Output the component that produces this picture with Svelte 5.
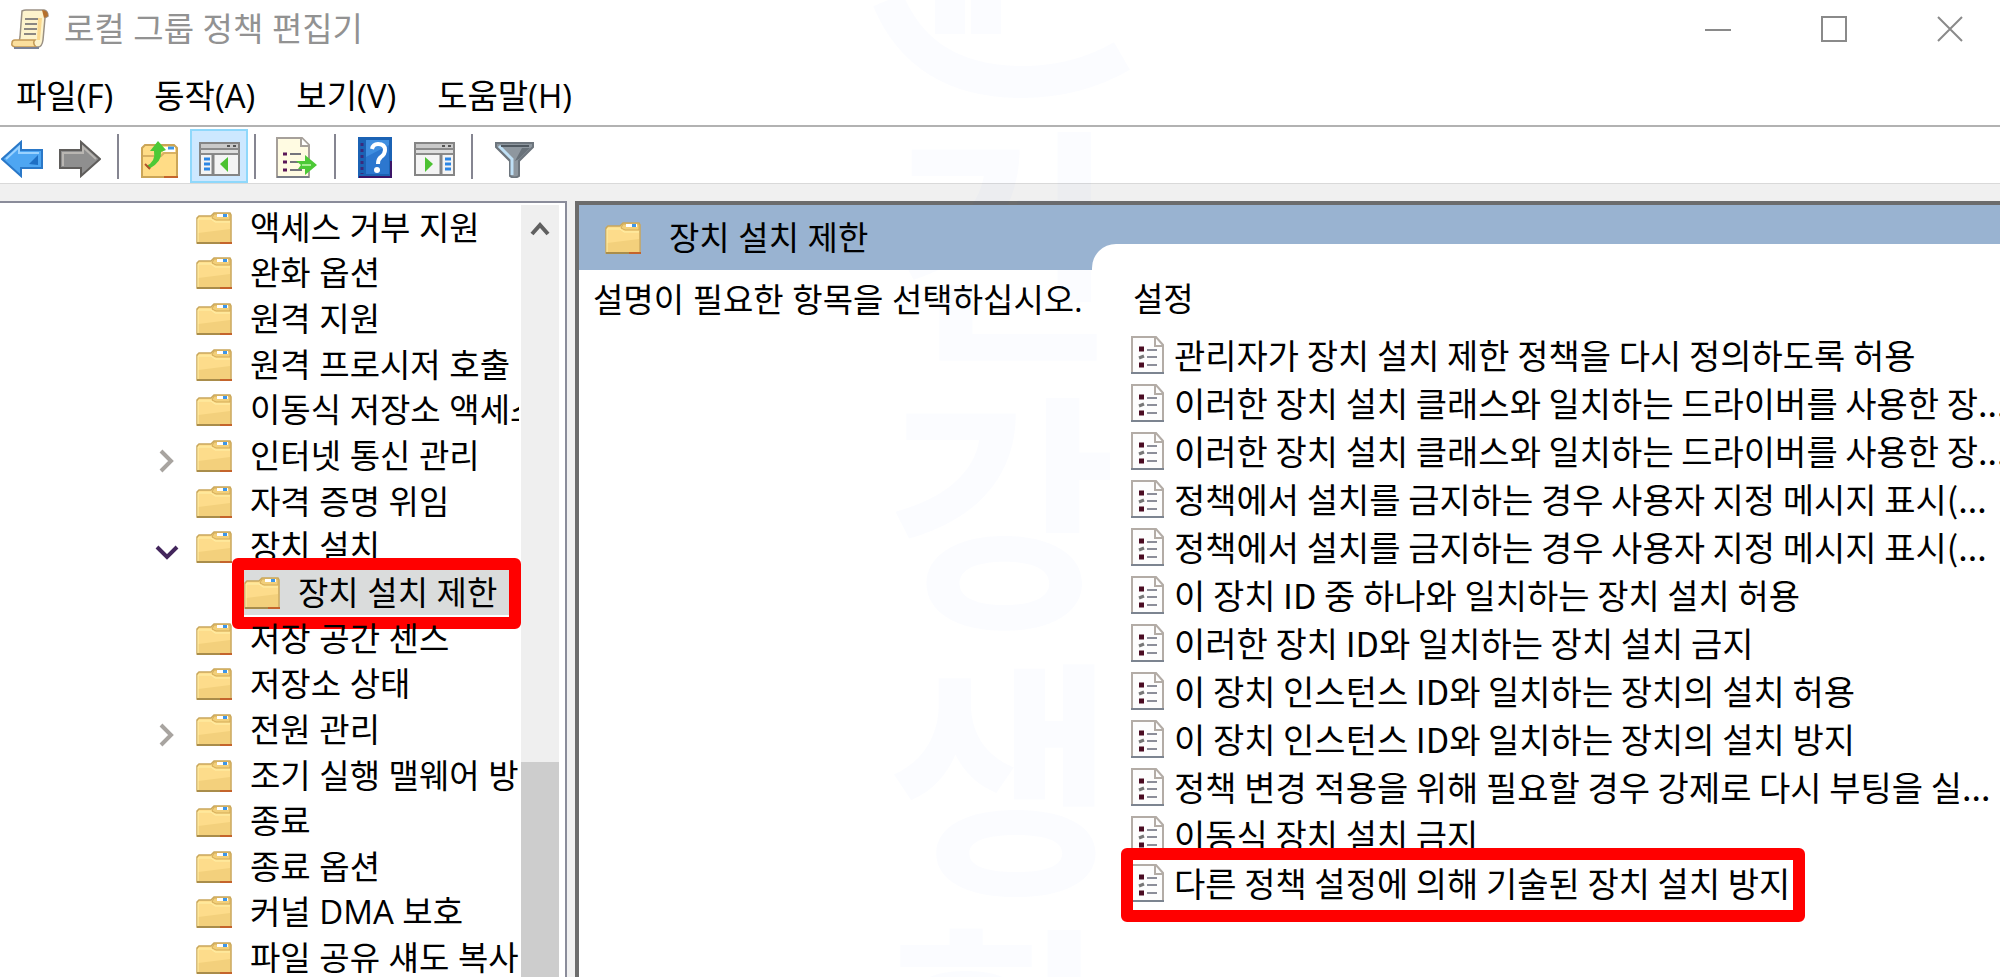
<script>
  const menus = ['파일(F)', '동작(A)', '보기(V)', '도움말(H)'];

  const tree = [
    { name: '액세스 거부 지원' },
    { name: '완화 옵션' },
    { name: '원격 지원' },
    { name: '원격 프로시저 호출' },
    { name: '이동식 저장소 액세스' },
    { name: '인터넷 통신 관리', state: 'closed' },
    { name: '자격 증명 위임' },
    { name: '장치 설치', state: 'open' },
    { name: '장치 설치 제한', child: true, marked: true },
    { name: '저장 공간 센스' },
    { name: '저장소 상태' },
    { name: '전원 관리', state: 'closed' },
    { name: '조기 실행 맬웨어 방지' },
    { name: '종료' },
    { name: '종료 옵션' },
    { name: '커널 DMA 보호' },
    { name: '파일 공유 섀도 복사본' }
  ];

  const settings = [
    { name: '관리자가 장치 설치 제한 정책을 다시 정의하도록 허용' },
    { name: '이러한 장치 설치 클래스와 일치하는 드라이버를 사용한 장...' },
    { name: '이러한 장치 설치 클래스와 일치하는 드라이버를 사용한 장...' },
    { name: '정책에서 설치를 금지하는 경우 사용자 지정 메시지 표시(...' },
    { name: '정책에서 설치를 금지하는 경우 사용자 지정 메시지 표시(...' },
    { name: '이 장치 ID 중 하나와 일치하는 장치 설치 허용' },
    { name: '이러한 장치 ID와 일치하는 장치 설치 금지' },
    { name: '이 장치 인스턴스 ID와 일치하는 장치의 설치 허용' },
    { name: '이 장치 인스턴스 ID와 일치하는 장치의 설치 방지' },
    { name: '정책 변경 적용을 위해 필요할 경우 강제로 다시 부팅을 실...' },
    { name: '이동식 장치 설치 금지' },
    { name: '다른 정책 설정에 의해 기술된 장치 설치 방지', marked: true }
  ];

  let selected = $state('장치 설치 제한');
</script>

{#snippet folder()}
  <svg class="folder" viewBox="0 0 36 32" aria-hidden="true">
    <path d="M1 6 L3 4 H15 L18 1 H34 L35 3 V31 H1 Z" fill="#ffdf8e" stroke="#c9a75c" stroke-width="1.5" />
    <path d="M18 2 H34 V8 H20 L16 6 Z" fill="#f2cf7a" stroke="#d3ac58" />
    <rect x="21" y="2" width="11" height="3" fill="#fff" />
    <rect x="27" y="2" width="4" height="3" fill="#3d96e8" />
    <path d="M2 7 H15 L19 10 H34 V30 H2 Z" fill="#fddc8b" />
    <path d="M2 21 L34 17 V30 H2 Z" fill="#f3d07c" />
    <path d="M2 30 V7 H15 L19 10 H34" fill="none" stroke="#fff0a8" />
    <path d="M1 31 H24" stroke="#a98d4b" stroke-width="2" />
    <path d="M24 31 H36" stroke="#c4642c" stroke-width="2" />
  </svg>
{/snippet}

{#snippet pane(flip)}
  <svg width="41" height="34" viewBox="0 0 41 34" aria-hidden="true">
    <rect x="1" y="1" width="39" height="32" fill="#f4f4f4" stroke="#858585" stroke-width="2" />
    <rect x="2" y="2" width="37" height="4" fill="#c9c9c9" />
    <path d="M28 4 H31 M34 4 H37" stroke="#555" stroke-width="2" />
    <path d="M1 7 H40 M1 12 H40" stroke="#8a8a8a" stroke-width="2" />
    <path d="M2 9.500 H39" stroke="#dedede" stroke-width="3" />
    {#if flip}
      <path d="M27 12 V33" stroke="#858585" stroke-width="3" />
      <path d="M31 17 H37 M31 22 H37 M31 27 H37" stroke="#2c86e4" stroke-width="3" />
      <path d="M11 15 L19 22 L11 30 Z" fill="#4cc232" />
    {:else}
      <path d="M14 12 V33" stroke="#858585" stroke-width="3" />
      <path d="M5 17 H11 M5 22 H11 M5 27 H11" stroke="#2c86e4" stroke-width="3" />
      <path d="M29 15 L21 22 L29 30 Z" fill="#4cc232" />
    {/if}
  </svg>
{/snippet}

<div class="window">
  <header class="titlebar">
    <svg width="38" height="40" viewBox="0 0 38 40" aria-hidden="true">
      <path d="M11 2 Q13 1 15 1 H33 Q37 2 37 7 L34 9 L32 31 Q31 38 27 38 H7 L9 28 Z" fill="#fdf3cc" stroke="#9a9084" stroke-width="1.5" />
      <path d="M31 1 Q37 1 37 7 L33 9 Z" fill="#b5702c" />
      <path d="M27 9 L31 9 L29 31 L26 31 Z" fill="#fbd98e" />
      <path d="M14 10 H27 M14 15 H26 M13 20 H26 M13 25 H25" stroke="#8b8782" stroke-width="2" />
      <path d="M4 31 H24 Q21 34 25 38 H4 Q0 37 1 34 Q1 31 4 31 Z" fill="#fbdf9d" stroke="#c39a58" stroke-width="1.500" />
      <path d="M3 39 H28" stroke="#7b8296" stroke-width="2" />
    </svg>
    <h1>로컬 그룹 정책 편집기</h1>
    <div class="caption">
      <button aria-label="최소화"><svg width="26" height="26" viewBox="0 0 26 26"><path d="M0 14 H26" /></svg></button>
      <button aria-label="최대화"><svg width="26" height="26" viewBox="0 0 26 26"><rect x="1" y="1" width="24" height="24" /></svg></button>
      <button aria-label="닫기"><svg width="26" height="26" viewBox="0 0 26 26"><path d="M1 1 L25 25 M25 1 L1 25" /></svg></button>
    </div>
  </header>

  <nav class="menubar">
    {#each menus as menu}<button>{menu}</button>{/each}
  </nav>

  <div class="toolbar">
    <button aria-label="뒤로">
      <svg width="42" height="38" viewBox="0 0 42 38">
        <path d="M1 19 L20 2 V10 H41 V28 H20 V36 Z" fill="#4ea6f2" stroke="#2a78c8" stroke-width="2" />
        <path d="M5 19 L18 7 V13 H38" fill="none" stroke="#9ad2ff" stroke-width="2" />
        <path d="M28 24 L37 15 V25 Z" fill="#1e6fc4" />
      </svg>
    </button>
    <button aria-label="앞으로">
      <svg width="42" height="38" viewBox="0 0 42 38">
        <path d="M41 19 L22 2 V10 H1 V28 H22 V36 Z" fill="#8f8f8f" stroke="#5f5d5b" stroke-width="2" />
        <path d="M4 26 V13 H24 V7 L37 19" fill="none" stroke="#b9b6b2" stroke-width="2" />
      </svg>
    </button>
    <span class="sep"></span>
    <button class="up" aria-label="위로">
      <svg width="37" height="38" viewBox="0 0 37 38">
        <path d="M1 8 L4 5 H33 L36 8 V37 H1 Z" fill="#ffdc86" stroke="#cba557" stroke-width="2" />
        <path d="M22 7 H34 V12 H22 Z" fill="#fff" />
        <path d="M27 8 H33" stroke="#3d96e8" stroke-width="3" />
        <path d="M2 16 H20 L23 13 H35" fill="none" stroke="#d8b163" stroke-width="2" />
        <path d="M5 26 Q15 22 13 11 H9 L17 1 L25 10 L20 12 Q21 22 8 29 Z" fill="#4cc936" />
        <path d="M4 24 L9 29" stroke="#b1542d" stroke-width="2" />
        <path d="M23 37 H37" stroke="#c4642c" stroke-width="2" />
      </svg>
    </button>
    <button class="active" aria-label="콘솔 트리 표시/숨기기" aria-pressed="true">{@render pane(false)}</button>
    <span class="sep near"></span>
    <button class="export" aria-label="목록 내보내기">
      <svg width="42" height="41" viewBox="0 0 42 41">
        <path d="M1 1 H26 L33 8 V40 H1 Z" fill="#fffbe2" stroke="#a6a09a" stroke-width="2" />
        <path d="M25 1 V9 H33" fill="#fff" stroke="#a6a09a" stroke-width="2" />
        <path d="M1 40 H33" stroke="#777b85" stroke-width="2" />
        <path d="M7 17 H11 M7 25 H11 M7 33 H11" stroke="#5b1758" stroke-width="3" />
        <path d="M14 17 H25 M14 25 H22 M14 33 H26" stroke="#74747c" stroke-width="2" />
        <path d="M20 24 H29 V18 L41 28 L29 38 V32 H22 L25 28 Z" fill="#4cc936" />
        <path d="M26 28 H35" stroke="#a8ee92" stroke-width="2" />
      </svg>
    </button>
    <span class="sep"></span>
    <button class="help" aria-label="도움말">
      <svg width="34" height="41" viewBox="0 0 34 41">
        <rect width="34" height="41" fill="#1b62b4" />
        <rect x="8" y="3" width="23" height="34" fill="#3f8ee0" />
        <path d="M8 20 L31 8 V37 H8 Z" fill="#2c77cf" />
        <path d="M4 6 V37" stroke="#3b2a7c" stroke-width="3" stroke-dasharray="3 3" />
        <path d="M1 40 H34 M33 24 V41" stroke="#3c1568" stroke-width="2" />
        <path d="M14 12 Q15 7 20 7 Q27 7 27 13 Q27 17 23 20 Q20 22 20 27" fill="none" stroke="#fff" stroke-width="4" />
        <circle cx="19" cy="33" r="3" fill="#fff" />
      </svg>
    </button>
    <button aria-label="작업 창 표시/숨기기">{@render pane(true)}</button>
    <span class="sep"></span>
    <button class="filter" aria-label="필터">
      <svg width="39" height="37" viewBox="0 0 39 37">
        <path d="M1 2 H38 V6 L24 20 V35 Q19 38 15 35 V20 L1 6 Z" fill="#8e979f" stroke="#6d757d" stroke-width="2" />
        <path d="M4 5 L17 18 V34" fill="none" stroke="#bfe0f6" stroke-width="3" />
        <path d="M6 5 H34" stroke="#4f5860" stroke-width="2" />
        <path d="M24 18 L35 7 H27 L20 20 Z" fill="#69727a" />
      </svg>
    </button>
  </div>

  <main class="panes">
    <aside class="tree">
      <ul>
        {#each tree as node}
          <li class:child={node.child}>
            <span class="twisty">
              {#if node.state === 'closed'}
                <button aria-label="확장"><svg width="16" height="24" viewBox="0 0 16 24"><path d="M2 2 L12 12 L2 22" stroke="#a8a4a0" /></svg></button>
              {:else if node.state === 'open'}
                <button aria-label="축소"><svg width="24" height="16" viewBox="0 0 24 16"><path d="M2 3 L12 13 L22 3" stroke="#43265c" /></svg></button>
              {/if}
            </span>
            <button class="node" class:selected={selected === node.name} onclick={() => (selected = node.name)}>
              {@render folder()}{node.name}
            </button>
            {#if node.marked}<span class="mark"></span>{/if}
          </li>
        {/each}
      </ul>
      <div class="scroll">
        <button aria-label="위로 스크롤"><svg width="20" height="18" viewBox="0 0 20 18"><path d="M2 15 L10 6 L18 15" stroke="#606060" /></svg></button>
        <div class="thumb"></div>
      </div>
    </aside>

    <section class="details">
      <div class="band">{@render folder()}<h2>장치 설치 제한</h2></div>
      <div class="columns">
        <p>설명이 필요한 항목을 선택하십시오.</p>
        <div class="list">
          <h3>설정</h3>
          <ul>
            {#each settings as item}
              <li>
                <button>
                  <svg width="33" height="38" viewBox="0 0 33 38" aria-hidden="true">
                    <path d="M1 1 H25 L32 9 V37 H1 Z" fill="#fdfdfd" stroke="#b3aca6" stroke-width="2" />
                    <path d="M24 1 V10 H32" fill="none" stroke="#b3aca6" stroke-width="2" />
                    <path d="M0 37 H33" stroke="#7c8490" stroke-width="2" />
                    <path d="M8 13 H13 M8 29 H13" stroke="#4a0c22" stroke-width="5" />
                    <path d="M8 22 L13 20" stroke="#777" stroke-width="3" />
                    <path d="M16 14 H26 M16 21 H26 M16 29 H26" stroke="#8c8e99" stroke-width="2" />
                  </svg>
                  {item.name}
                </button>
                {#if item.marked}<span class="mark"></span>{/if}
              </li>
            {/each}
          </ul>
        </div>
      </div>
    </section>
  </main>

  <!-- faint stamp printed over the whole window -->
  <div class="stamp" aria-hidden="true">
    <svg width="260" height="100" viewBox="0 0 260 100">
      <path d="M16 0 Q50 82 150 82 Q205 82 250 56" fill="none" stroke-width="32" />
      <path d="M78 0 V34 M114 0 V34" stroke-width="30" />
    </svg>
    <span>건</span><span>강</span><span>생</span><span>활</span>
  </div>
</div>

<style>
  :global(body) { background: #fff; overflow: hidden; }

  .window {
    position: relative;
    display: flex;
    flex-direction: column;
    height: 100vh;
    overflow: hidden;
    color: #000;
    background: #fff;
    font: 33px/40px "Open Sans", "Noto Sans CJK KR", sans-serif;
  }

  button { display: flex; align-items: center; flex: none; margin: 0; padding: 0; border: 0; background: none; color: inherit; font: inherit; white-space: nowrap; }
  ul { list-style: none; margin: 0; padding: 0; }
  h1, h2, h3, p { margin: 0; font: inherit; white-space: nowrap; }
  svg { display: block; flex: none; }

  .titlebar { display: flex; align-items: center; flex: none; height: 58px; padding-left: 11px; gap: 15px; color: #929292; }
  .caption { display: flex; gap: 16px; margin-left: auto; }
  .caption button { justify-content: center; width: 100px; height: 58px; }
  .caption svg { fill: none; stroke: #8a8a8a; stroke-width: 2; }

  .menubar { display: flex; align-items: center; flex: none; gap: 41px; height: 59px; padding: 8px 16px 0; border-bottom: 2px solid #b2b2b2; }

  .toolbar { display: flex; align-items: center; flex: none; box-sizing: border-box; height: 57px; padding: 2px 0 0 1px; gap: 16px; border-bottom: 1px solid #d9d9d9; }
  .toolbar button { height: 54px; padding-top: 6px; box-sizing: border-box; }
  .sep { width: 2px; height: 45px; background: #858591; }
  .toolbar .up { padding-left: 6px; }
  .toolbar .active { justify-content: center; width: 58px; margin-left: -4px; border: 2px solid #8fd8fb; background: #cde8ff; }
  .sep.near { margin-left: -10px; }
  .toolbar .export { padding: 2px 0 0 4px; }
  .toolbar .help { padding: 2px 6px 0 6px; }
  .toolbar .filter { padding-left: 6px; }

  .panes { display: grid; grid-template-columns: 567px minmax(0, 1fr); gap: 8px; flex: 1; min-height: 0; padding-top: 17px; background: #f0f0f0; }

  .tree { display: flex; min-height: 0; border: solid #8a8c9a; border-width: 2px 2px 0 0; background: #fff; }
  .tree ul { display: flex; flex-direction: column; flex: 1; min-width: 0; padding-top: 2px; margin: 0 2px -4px 0; }
  .tree li { position: relative; display: flex; align-items: center; flex: 1; min-height: 0; padding-left: 148px; }
  .tree li.child { padding-left: 196px; }
  .tree li:not(.child) { overflow: hidden; }
  .twisty { display: flex; flex: none; justify-content: center; width: 38px; padding: 10px 10px 0 0; }
  .child .twisty { display: none; }
  .twisty path, .scroll path { fill: none; stroke-width: 4; }
  .node { gap: 18px; height: 45px; }
  .child .node { padding: 0 12px 0 48px; }
  .selected { background: linear-gradient(#dadcdc, #dadcdc) 48px 0 no-repeat; }
  .folder { width: 36px; height: 32px; }

  .scroll { display: flex; flex-direction: column; width: 38px; margin: 2px 6px 0 0; background: #efefef; }
  .scroll button { justify-content: center; height: 46px; }
  .thumb { height: 215px; margin-top: auto; background: #cdcdcd; }

  .details { min-width: 0; border: solid #6c6c6c; border-width: 4px 0 0 4px; background: #fff; }
  /* the band and the list sit above the stamp */
  .band { position: relative; z-index: 1; display: flex; align-items: center; gap: 28px; height: 65px; padding-left: 26px; background: #99b3d1; }
  .columns { display: flex; }
  .columns p { flex: none; width: 499px; padding: 10px 0 0 14px; }
  .list { position: relative; z-index: 2; flex: 1; min-width: 0; margin-top: -26px; padding: 34px 0 0 39px; border-radius: 24px 0 0 0; background: linear-gradient(#fff, #fff) 0 0 / 100% 26px no-repeat; }
  .list h3 { margin: 0 0 11px 2px; line-height: 42px; }
  .list li { position: relative; height: 48px; }
  .list li button { gap: 10px; height: 48px; font: 34px/40px "Noto Sans CJK KR", sans-serif; }

  .mark { position: absolute; border: 12px solid #f00; border-radius: 6px; pointer-events: none; }
  .tree .mark { inset: -12px -2px -13px 232px; }
  .list .mark { inset: -11px auto -15px -10px; width: 660px; }

  .stamp { position: absolute; top: 0; left: 872px; width: 260px; display: flex; flex-direction: column; align-items: center; color: rgba(60, 120, 255, .018); font: 700 250px/266px "Noto Sans CJK KR", sans-serif; pointer-events: none; }
  .stamp svg { stroke: currentColor; }
  .stamp span { display: block; }
</style>
